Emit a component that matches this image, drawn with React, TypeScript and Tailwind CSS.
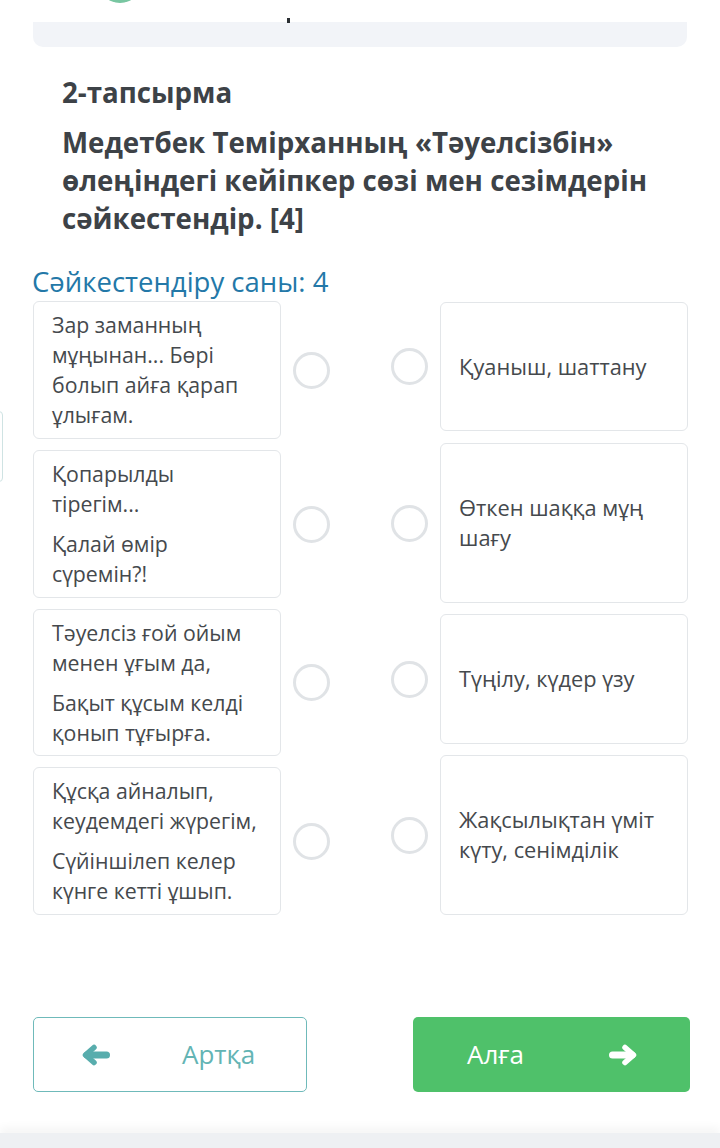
import React from "react";

const leftCards: { h: string; paras: string[][] }[] = [
  { h: "h-[138px]", paras: [["Зар заманның", "мұңынан... Бөрі", "болып айға қарап", "ұлығам."]] },
  { h: "h-[148px]", paras: [["Қопарылды", "тірегім..."], ["Қалай өмір", "сүремін?!"]] },
  { h: "h-[147px]", paras: [["Тәуелсіз ғой ойым", "менен ұғым да,"], ["Бақыт құсым келді", "қонып тұғырға."]] },
  { h: "h-[148px]", paras: [["Құсқа айналып,", "кеудемдегі жүрегім,"], ["Сүйіншілеп келер", "күнге кетті ұшып."]] },
];

const rightCards: { h: string; lines: string[] }[] = [
  { h: "h-[129px]", lines: ["Қуаныш, шаттану"] },
  { h: "h-[160px]", lines: ["Өткен шаққа мұң", "шағу"] },
  { h: "h-[130px]", lines: ["Түңілу, күдер үзу"] },
  { h: "h-[160px]", lines: ["Жақсылықтан үміт", "күту, сенімділік"] },
];

function Circle() {
  return <div className="w-[37px] h-[37px] shrink-0 rounded-full border-[3px] border-[#e0e3e6] bg-white" />;
}

function Arrow({ dir, color }: { dir: "left" | "right"; color: string }) {
  return (
    <svg
      width="28"
      height="22"
      viewBox="0 0 28 22"
      style={{ transform: dir === "right" ? "scaleX(-1)" : undefined }}
    >
      <polyline
        points="12,3.5 3.5,11 12,18.5"
        fill="none"
        stroke={color}
        strokeWidth="5.5"
        strokeLinecap="round"
        strokeLinejoin="round"
      />
      <line x1="5" y1="11" x2="24.5" y2="11" stroke={color} strokeWidth="7" strokeLinecap="round" />
    </svg>
  );
}

export default function App() {
  return (
    <div
      className="relative w-[720px] h-[1148px] bg-white overflow-hidden flex flex-col"
      style={{ fontFamily: '"Open Sans", "Noto Sans", sans-serif' }}
    >
      {/* header remnant */}
      <div className="relative h-[22px]">
        <div className="absolute left-[98px] top-[-30px] w-[44px] h-[33px] rounded-b-full border-b-[3px] border-[#3fae7a] opacity-70" />
      </div>
      <div className="relative mx-[33px] h-[25px] bg-[#f2f4f8] rounded-b-[10px]">
        <div className="absolute left-[254px] top-[-4px] w-[3px] h-[5px] bg-[#2b2f33]" />
      </div>

      {/* left edge tab */}
      <div className="absolute left-[-7px] top-[411px] w-[10px] h-[71px] rounded border border-[#cfe3e3] bg-white" />

      <div className="px-[62px] mt-[26px] text-[#3d4247] font-bold">
        <div className="text-[27.7px] leading-[38px]">2-тапсырма</div>
        <div className="mt-[12px] text-[27.7px] leading-[38px]">
          Медетбек Темірханның «Тәуелсізбін»
          <br />
          өлеңіндегі кейіпкер сөзі мен сезімдерін
          <br />
          сәйкестендір. [4]
        </div>
      </div>

      <div className="px-[32px] mt-[27px] text-[27.5px] leading-[35px] text-[#2378a8]">Сәйкестендіру саны: 4</div>

      <div className="flex px-[33px] mt-[2px] gap-[61px] items-start">
        <div className="flex flex-col gap-[11px]">
          {leftCards.map((c, i) => (
            <div key={i} className="flex items-center gap-[12px]">
              <div
                className={`w-[248px] ${c.h} rounded-[6px] border border-[#e3e6e9] bg-white pl-[18px] pr-[4px] flex flex-col justify-center gap-[10px] text-[21.3px] leading-[30px] text-[#45494d]`}
              >
                {c.paras.map((p, j) => (
                  <p key={j} className="whitespace-nowrap">
                    {p.map((l, k) => (
                      <React.Fragment key={k}>
                        {k > 0 && <br />}
                        {l}
                      </React.Fragment>
                    ))}
                  </p>
                ))}
              </div>
              <Circle />
            </div>
          ))}
        </div>
        <div className="flex flex-col gap-[11px] mt-[1px]">
          {rightCards.map((c, i) => (
            <div key={i} className={`flex items-center gap-[12px] ${i === 1 ? "mt-[1px]" : ""}`}>
              <Circle />
              <div
                className={`w-[248px] ${c.h} rounded-[6px] border border-[#e3e6e9] bg-white pl-[18px] pr-[4px] flex flex-col justify-center text-[21.8px] leading-[30px] text-[#45494d]`}
              >
                {c.lines.map((l, k) => (
                  <div key={k} className="whitespace-nowrap">
                    {l}
                  </div>
                ))}
              </div>
            </div>
          ))}
        </div>
      </div>

      <div className="flex justify-between pr-[30px] pl-[33px] mt-[102px]">
        <div className="w-[274px] h-[75px] rounded-[5px] border border-[#6fbaba] bg-white flex items-center pl-[48px] gap-[72px]">
          <Arrow dir="left" color="#58adad" />
          <span className="text-[26px] text-[#63b4b4]">Артқа</span>
        </div>
        <div className="w-[277px] h-[75px] rounded-[5px] bg-[#4fc16a] flex items-center justify-between pl-[54px] pr-[53px]">
          <span className="text-[26px] text-white">Алға</span>
          <Arrow dir="right" color="#ffffff" />
        </div>
      </div>

      <div className="mt-auto h-[15px] bg-[#eef0f3] shadow-[0_-6px_8px_rgba(0,0,0,0.04)]" />
    </div>
  );
}
